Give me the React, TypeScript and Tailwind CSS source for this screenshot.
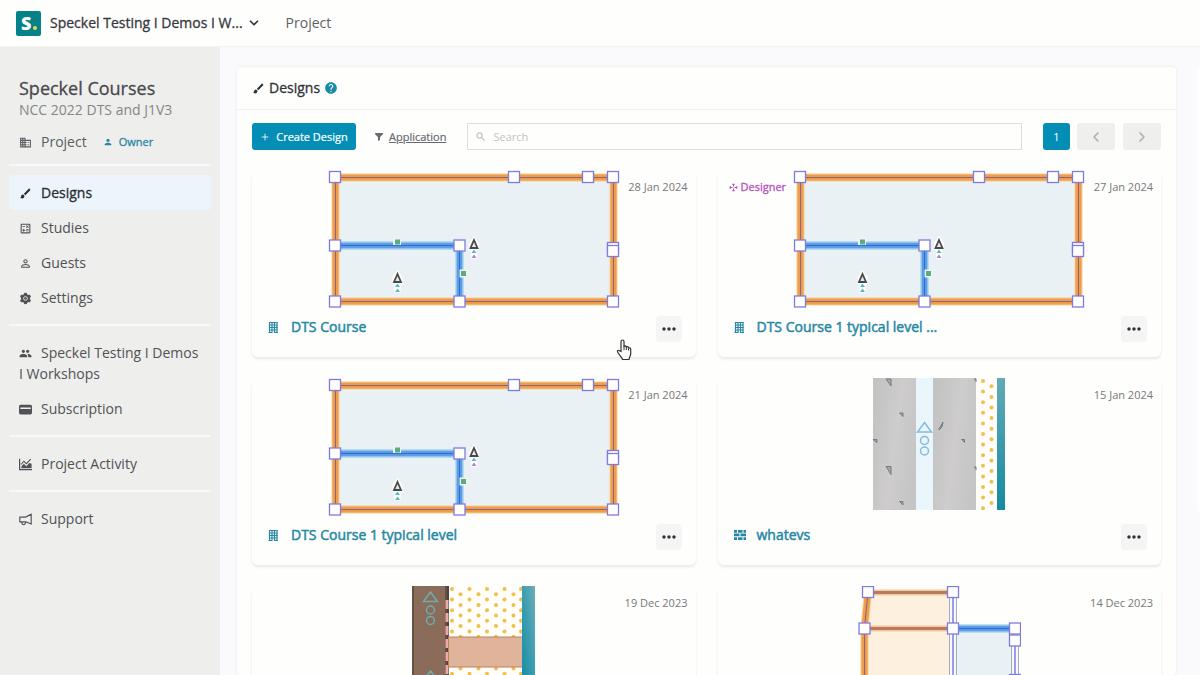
import type { ReactNode } from "react"
import clsx from "clsx"
import { AiFillSetting } from "react-icons/ai"
import { FiChevronDown, FiChevronLeft, FiChevronRight, FiPlus } from "react-icons/fi"
import {
  MdBrush,
  MdBusiness,
  MdHelp,
  MdMoreHoriz,
  MdOutlineCalculate,
  MdPeople,
  MdPerson,
  MdPersonOutline,
} from "react-icons/md"

type Point = [number, number]

function AreaChartIcon() {
  return (
    <svg viewBox="0 0 16 16" fill="currentColor">
      <path d="M0 1h1.500v12.500H16V15H0z" />
      <path d="M3 12.500V10l3-3 3 3 3.500-4 3 1v5.500z" />
      <path d="M2.500 8 6 4l3 3 5.500-5.500" fill="none" stroke="currentColor" strokeWidth="1.300" />
    </svg>
  )
}

function CardIcon() {
  return (
    <svg viewBox="0 0 16 16" fill="currentColor">
      <path d="M2 2h12a2 2 0 0 1 2 2v1.500H0V4a2 2 0 0 1 2-2zM0 7.500h16V12a2 2 0 0 1-2 2H2a2 2 0 0 1-2-2z" />
      <path d="M0 5h1.500v3H0zM14.500 5H16v3h-1.500z" />
    </svg>
  )
}

function MegaphoneIcon() {
  return (
    <svg viewBox="0 0 16 16" fill="none" stroke="currentColor" strokeWidth="1.400">
      <path d="M15 1.500v12L8.500 11H1V5h7z" />
      <path d="M3.500 11c0 4.500 4.500 4.500 4.500.5" />
    </svg>
  )
}

function BuildingIcon() {
  return (
    <svg viewBox="0 0 10 11" className="h-[11px] w-2.5" fill="none" stroke="currentColor">
      <path d="M1.500 0v11M4 0v11M6.500 0v11M9 0v11" strokeWidth="1.200" />
      <path d="M1 .5h8.500M1 3h8.500M1 5.500h8.500M1 8h8.500M.5 10.500h3.500M6.500 10.500H10" strokeWidth="1.100" />
    </svg>
  )
}

function BricksIcon() {
  return (
    <svg viewBox="0 0 12 10" className="h-2.5 w-3" fill="currentColor">
      <path d="M0 0h3v2.700H0zM4 0h4.500v2.700H4zM9.500 0H12v2.700H9.500zM0 3.600h5.500v2.700H0zM6.500 3.600H12v2.700H6.500zM0 7.200h3v2.700H0zM4 7.200h4.500v2.700H4zM9.500 7.200H12v2.700H9.500z" />
    </svg>
  )
}

function DesignerIcon() {
  return (
    <svg viewBox="0 0 10 10" className="size-[9px]" fill="none" stroke="currentColor" strokeWidth="1.300">
      <path d="M5 1v3M5 6v3M1 5h3M6 5h3" />
      <path d="M3.600 1.400h2.800M3.600 8.600h2.800M1.400 3.600v2.800M8.600 3.600v2.800" />
    </svg>
  )
}

function Node({ at: [x, y] }: { at: Point }) {
  return <rect x={x - 5.5} y={y - 5.5} width="11" height="11" fill="#fff" stroke="#7f7bdc" strokeWidth="1.3" />
}

const wallLayers = {
  outer: [["#f8cd8d", 8], ["#ee9c4e", 6], ["#8f6478", 1]],
  inner: [["#8cc6ea", 8], ["#5c9de6", 5], ["#3467d6", 1]],
  glass: [["#a9abc0", 8], ["#f7f8fc", 6], ["#7f7fe0", 1.5]],
} as const

function Wall({ d, kind }: { d: string; kind: keyof typeof wallLayers }) {
  return (
    <g fill="none">
      {wallLayers[kind].map(([color, width]) => (
        <path key={color} d={d} stroke={color} strokeWidth={width} />
      ))}
    </g>
  )
}

function Marker({ x, y, tail }: { x: number; y: number; tail: string }) {
  return (
    <g>
      <path d={`M${x - 5} ${y + 6}V${y - 1}l5-7 5 7v7zM${x - 3} ${y + 5}h6v10h-6z`} fill="#fff" />
      <path d={`M${x} ${y - 4}l3.500 8h-7z`} fill="#e5eaec" stroke="#484848" strokeWidth="1.800" />
      <path d={`M${x} ${y + 5.5}l2.500 3.500h-5z`} fill="#56b9c4" />
      <path d={`M${x} ${y + 10.5}l2.500 3.500h-5z`} fill={tail} />
    </g>
  )
}

function FloorPlan() {
  const nodes: Point[] = [
    [7, 7], [186, 7], [260, 7], [285, 7],
    [7, 75.5], [131.5, 75.5], [285, 78], [285, 81],
    [7, 131.5], [131.5, 131.5], [285, 131.5],
  ]
  return (
    <svg viewBox="0 0 292 138" className="h-[138px] w-[292px]">
      <rect x="7" y="7" width="278" height="124" fill="#e9f1f4" />
      <Wall d="M7.500 7.500H285.500V131.500H7.500Z" kind="outer" />
      <Wall d="M7 75.500H131.500V131" kind="inner" />
      <rect x="65" y="68" width="8" height="7" fill="#eef6f2" />
      <rect x="67" y="69.500" width="5" height="5" fill="#5aac7e" />
      <rect x="131.500" y="99.500" width="8" height="8" fill="#eef6f2" />
      <rect x="133" y="101" width="5" height="5" fill="#5aac7e" />
      <Marker x={146} y={74} tail="#b57fd0" />
      <Marker x={69.5} y={108} tail="#56b9c4" />
      {nodes.map((at) => (
        <Node key={at.join()} at={at} />
      ))}
    </svg>
  )
}

function ExtensionPlan() {
  const nodes: Point[] = [[10, 6], [95, 6], [6.5, 42.5], [95, 42.5], [157, 42.5], [157, 54.5], [157, 94]]
  return (
    <svg viewBox="0 0 163 100" className="h-[100px] w-[163px]">
      <path d="M10 6H95V100H6V42Z" fill="#fdf0df" />
      <path d="M95 42H157V100H95Z" fill="#e9f1f4" />
      <Wall d="M95 6V100" kind="glass" />
      <Wall d="M157 54V100" kind="glass" />
      <g fill="none">
        <path d="M10 6.500H95M6.500 42.500H95" stroke="#f2c79d" strokeWidth="6" />
        <path d="M10 6.500H95M6.500 42.500H95" stroke="#b97a62" strokeWidth="3" />
      </g>
      <Wall d="M10 6L6.500 42V100" kind="outer" />
      <Wall d="M95 42.500H157" kind="inner" />
      {nodes.map((at) => (
        <Node key={at.join()} at={at} />
      ))}
    </svg>
  )
}

function Dots({ columns, height }: { columns: number[]; height: number }) {
  const rows = Array.from({ length: Math.ceil(height / 10.6) }, (_, i) => i)
  return (
    <g fill="#f0c04a">
      {columns.map((x, c) =>
        rows.map((r) => <circle key={`${x}-${r}`} cx={x} cy={3 + r * 10.6 + (c % 2) * 5.3} r="2" />),
      )}
    </g>
  )
}

function AirGap({ x, y, color }: { x: number; y: number; color: string }) {
  return (
    <g fill="none" stroke={color} strokeWidth="1.500">
      <path d={`M${x} ${y}l7 9.500h-14z`} />
      <circle cx={x} cy={y + 18} r="4" />
      <circle cx={x} cy={y + 28.5} r="4" />
    </g>
  )
}

function ConcreteWall() {
  return (
    <svg viewBox="0 0 132 132" className="size-[132px]">
      <defs>
        <linearGradient id="concrete" x1="0" y1="0.3" x2="1" y2="0.7">
          <stop offset="0" stopColor="#c3c3c4" />
          <stop offset="0.5" stopColor="#cecccd" />
          <stop offset="1" stopColor="#c5c5c5" />
        </linearGradient>
        <linearGradient id="board" x1="0" y1="0" x2="0" y2="1">
          <stop offset="0" stopColor="#62aab6" />
          <stop offset="1" stopColor="#168ba0" />
        </linearGradient>
      </defs>
      <rect width="132" height="132" fill="#fffefc" />
      <rect width="43" height="132" fill="url(#concrete)" />
      <rect x="60" width="43" height="132" fill="url(#concrete)" />
      <rect x="43" width="17" height="132" fill="#ebf6fc" />
      <g fill="#aaa" stroke="#77797c">
        <path d="M13 1h5v7zM26.500 35h3.500v3.500zM0 61.500h4v3zM13 88.500h5v8zM26.500 123.500h3.500v3.500z" />
        <path d="M66 51l4-7-1 5-3 3zM88.500 61.500h3v3zM101 1h2v3M101 89h2v3" />
      </g>
      <AirGap x={51.5} y={44.5} color="#7fbddb" />
      <Dots columns={[110, 118.5]} height={132} />
      <rect x="124" width="8" height="132" fill="url(#board)" />
    </svg>
  )
}

function TimberWall() {
  return (
    <svg viewBox="0 0 124 100" className="h-[100px] w-[124px]">
      <defs>
        <linearGradient id="lining" x1="1" y1="0" x2="0" y2="1">
          <stop offset="0" stopColor="#6fadb8" />
          <stop offset="0.500" stopColor="#3a9db0" />
          <stop offset="1" stopColor="#168ba4" />
        </linearGradient>
      </defs>
      <rect x="37" width="73" height="100" fill="#fffefa" />
      <rect width="34" height="100" fill="#8b6c5b" />
      <path d="M1 0V100M34 0V100" stroke="#66503f" strokeWidth="2" />
      <path d="M36 0V100" stroke="#4b4348" strokeWidth="2" />
      <path d="M35 14V100" stroke="#f2a8a6" strokeWidth="3" strokeDasharray="9 4" />
      <AirGap x={18.5} y={6} color="#6aaeae" />
      <AirGap x={18.5} y={85} color="#6aaeae" />
      <Dots columns={[40, 48.5, 57.5, 66.5, 75, 84, 92.5, 101.5, 109]} height={100} />
      <rect x="36.500" y="51" width="74" height="30" fill="#e0b49a" stroke="#b7835c" />
      <rect x="110" width="13" height="100" fill="url(#lining)" />
    </svg>
  )
}

interface Design {
  id: number
  name?: string
  date: string
  kind: "building" | "wall"
  art: ReactNode
  designer?: boolean
}

const designs: Design[] = [
  { id: 1, name: "DTS Course", date: "28 Jan 2024", kind: "building", art: <FloorPlan /> },
  { id: 2, name: "DTS Course 1 typical level ...", date: "27 Jan 2024", kind: "building", art: <FloorPlan />, designer: true },
  { id: 3, name: "DTS Course 1 typical level", date: "21 Jan 2024", kind: "building", art: <FloorPlan /> },
  { id: 4, name: "whatevs", date: "15 Jan 2024", kind: "wall", art: <ConcreteWall /> },
  { id: 5, date: "19 Dec 2023", kind: "wall", art: <TimberWall /> },
  { id: 6, date: "14 Dec 2023", kind: "building", art: <ExtensionPlan /> },
]

function DesignCard({ design }: { design: Design }) {
  return (
    <article className="h-[187px] rounded-md shadow-[0_2px_3px_rgba(0,0,0,0.09)]">
      <div className="grid h-36 grid-cols-[1fr_auto_1fr] px-2 text-[11px] leading-4">
        <div className="pt-[9px]">
          {design.designer && (
            <span className="flex items-center gap-[3px] pl-[3px] text-[#b650bd] [-webkit-text-stroke:0.3px]">
              <DesignerIcon />
              Designer
            </span>
          )}
        </div>
        {design.art}
        <time className="pt-[9px] text-right text-[#77787a]">{design.date}</time>
      </div>
      {design.name && (
        <div className="flex items-start px-3.5 pt-0.5">
          <div className="flex flex-1 items-center pl-0.5 text-[#2788a5]">
            <span className="w-[23px]">{design.kind === "building" ? <BuildingIcon /> : <BricksIcon />}</span>
            <a href="#" className="text-sm leading-[22px] [-webkit-text-stroke:0.5px]">{design.name}</a>
          </div>
          <button
            aria-label="More actions"
            className="flex size-[26px] items-center justify-center rounded bg-[#f5f5f5] text-[#333]"
          >
            <MdMoreHoriz className="size-5" />
          </button>
        </div>
      )}
    </article>
  )
}

function NavItem({ icon, label, active }: { icon: ReactNode; label: string; active?: boolean }) {
  return (
    <a
      href="#"
      className={clsx(
        "block rounded px-2.5 py-[7px] leading-[21px]",
        active ? "bg-[#ecf4fc] text-[#2b2d33] [-webkit-text-stroke:0.3px]" : "text-[#505256]",
      )}
    >
      <span className="mr-[9px] inline-block size-[13px] align-[-2px] [&>svg]:size-full">{icon}</span>
      {label}
    </a>
  )
}

function Divider() {
  return <hr className="my-[9px] h-0.5 border-0 bg-[#f8f8f8]" />
}

function Sidebar() {
  return (
    <aside className="w-[220px] shrink-0 bg-[#eeeeec] px-[9px] pt-[29px] text-sm">
      <div className="px-2.5 pb-px">
        <h1 className="text-lg leading-6 text-[#48494d] [-webkit-text-stroke:0.3px]">Speckel Courses</h1>
        <p className="leading-5 text-[#85868a]">NCC 2022 DTS and J1V3</p>
        <div className="mt-2.5 flex items-center leading-6 text-[#5b5d61]">
          <MdBusiness className="mr-[9px] size-[13px]" />
          Project
          <span className="ml-4 flex items-center gap-1.5 text-[11px] text-[#2788a5] [-webkit-text-stroke:0.3px]">
            <MdPerson className="size-2.5" />
            Owner
          </span>
        </div>
      </div>
      <Divider />
      <nav>
        <NavItem icon={<MdBrush />} label="Designs" active />
        <NavItem icon={<MdOutlineCalculate />} label="Studies" />
        <NavItem icon={<MdPersonOutline />} label="Guests" />
        <NavItem icon={<AiFillSetting />} label="Settings" />
        <Divider />
        <NavItem icon={<MdPeople />} label="Speckel Testing I Demos I Workshops" />
        <NavItem icon={<CardIcon />} label="Subscription" />
        <Divider />
        <NavItem icon={<AreaChartIcon />} label="Project Activity" />
        <Divider />
        <NavItem icon={<MegaphoneIcon />} label="Support" />
      </nav>
    </aside>
  )
}

function Toolbar() {
  return (
    <div className="flex h-[27px] items-stretch text-[11px]">
      <button className="flex w-[104px] items-center justify-center gap-1.5 rounded-[3px] bg-[#058eb5] text-white [-webkit-text-stroke:0.2px]">
        <FiPlus className="size-2.5" />
        Create Design
      </button>
      <button className="ml-[19px] flex items-center gap-1.5 text-[#696b70] underline [-webkit-text-stroke:0.2px]">
        <svg viewBox="0 0 8 8" className="size-2" fill="currentColor">
          <path d="M0 0h8v1L5 4.300V7L3 8V4.300L0 1z" />
        </svg>
        Application
      </button>
      <label className="ml-[21px] flex flex-1 items-center gap-2 border border-[#dedede] pl-2 text-[#c4c4c4]">
        <svg viewBox="0 0 9 9" className="size-[9px]" fill="none" stroke="currentColor" strokeWidth="1.200">
          <circle cx="3.500" cy="3.500" r="2.600" />
          <path d="M5.500 5.500 8.500 8.500" />
        </svg>
        <input
          type="text"
          aria-label="Search designs"
          placeholder="Search"
          className="min-w-0 flex-1 bg-transparent outline-none placeholder:text-[#c4c4c4]"
        />
      </label>
      <button className="ml-[21px] w-[27px] rounded-[3px] bg-[#058eb5] text-white">1</button>
      <button aria-label="Previous page" className="ml-[7px] flex w-[38px] items-center justify-center rounded-[3px] bg-[#efefed] text-[#b0b0b0]">
        <FiChevronLeft className="size-4 stroke-[2.5px]" />
      </button>
      <button aria-label="Next page" className="ml-2 flex w-[38px] items-center justify-center rounded-[3px] bg-[#efefed] text-[#b0b0b0]">
        <FiChevronRight className="size-4 stroke-[2.5px]" />
      </button>
    </div>
  )
}

function HandCursor() {
  return (
    <svg viewBox="0 0 16 22" className="absolute top-[339px] left-[616px] h-[22px] w-4">
      <path
        d="M5 12.500V2.500a1.500 1.500 0 0 1 3 0V8c0-1.500 2.300-1.500 2.300 0v.7c0-1.400 2.200-1.300 2.200.2v.7c0-1.200 2.200-1 2.200.5V15c0 1.500-.9 2.300-1.200 3.500l-.5 2H6.500c-.3-1.900-2-3.300-3.200-4.800-.8-1.100-2-2.800-1.900-3.700.3-1.100 1.600-.9 2.200-.2z"
        fill="#fff"
        stroke="#333"
        strokeWidth="1.200"
      />
      <path d="M8 7.500V11M10.300 8.500V11M12.500 9.500V11.500" stroke="#333" />
    </svg>
  )
}

export default function App() {
  return (
    <div className="relative flex h-screen flex-col overflow-hidden bg-[#fafafc] font-['Open_Sans',sans-serif] text-sm">
      <header className="flex h-[47px] shrink-0 items-center border-b border-[#f4f4f4] bg-[#fefefd] pl-4">
        <svg viewBox="0 0 25 25" className="size-[25px]">
          <rect width="25" height="25" rx="2" fill="#058289" />
          <text x="5" y="19" fontSize="18" fontWeight="800" fill="#fff" fontFamily="Open Sans">S</text>
          <circle cx="19" cy="17" r="2" fill="#e9d84f" />
        </svg>
        <button className="ml-[9px] flex items-center gap-1 text-[#36383d] [-webkit-text-stroke:0.3px]">
          Speckel Testing I Demos I W...
          <FiChevronDown className="size-[14px] stroke-[3px]" />
        </button>
        <a href="#" className="ml-[25px] text-[#5e6065]">Project</a>
      </header>
      <div className="flex min-h-0 flex-1">
        <Sidebar />
        <main className="flex min-w-0 flex-1 gap-[21px] pt-5 pl-[17px]">
          <section className="min-w-0 flex-1 rounded bg-[#fefefd] shadow-[0_0_3px_rgba(0,0,0,0.08)]">
            <h2 className="flex h-[43px] items-center border-b border-[#f1f1f1] px-[15px] text-[#2f3136] [-webkit-text-stroke:0.3px]">
              <MdBrush className="mr-1 size-[13px]" />
              Designs
              <MdHelp className="ml-1 size-[14px] text-[#178aa8]" />
            </h2>
            <div className="px-[15px] pt-[13px]">
              <Toolbar />
              <div className="mt-5 grid grid-cols-2 gap-x-[22px] gap-y-[21px]">
                {designs.map((design) => (
                  <DesignCard key={design.id} design={design} />
                ))}
              </div>
            </div>
          </section>
          <div className="h-[446px] w-[3px] shrink-0 rounded-l bg-[#fefefd]" />
        </main>
      </div>
      <HandCursor />
    </div>
  )
}
